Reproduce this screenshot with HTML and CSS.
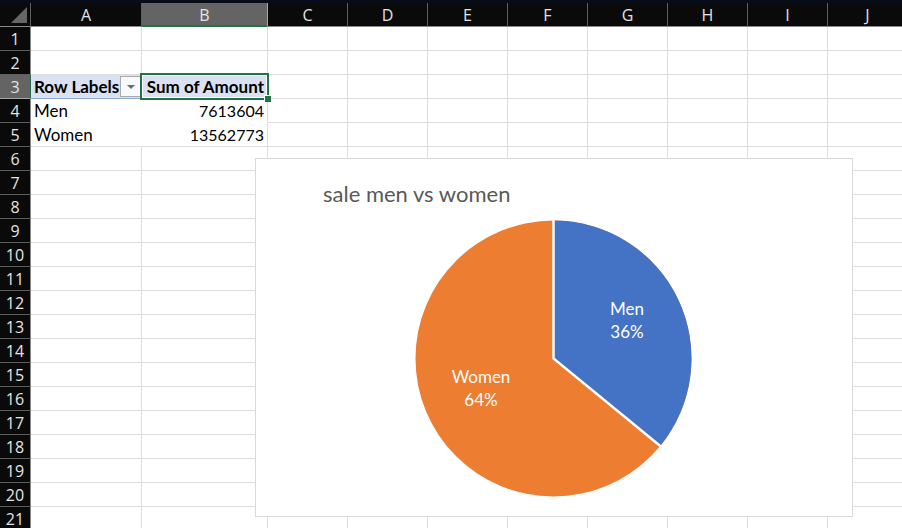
FILE: index.html
```
<!DOCTYPE html>
<html lang="en">
<head>
<meta charset="utf-8">
<title>Sales by gender</title>
<link rel="stylesheet" href="styles.css">
</head>
<body>
<main class="workbook">
  <table class="sheet">
    <colgroup><col class="col-rows"><col class="col-a"><col class="col-b"><col class="col" span="8"></colgroup>
    <thead>
      <tr><th class="corner"><svg viewBox="0 0 30 23" aria-hidden="true"><path d="M27 4v16H11z" fill="#666"/></svg></th><th>A</th><th class="active">B</th><th>C</th><th>D</th><th>E</th><th>F</th><th>G</th><th>H</th><th>I</th><th>J</th></tr>
    </thead>
    <tbody>
      <tr><th>1</th><td></td><td></td><td></td><td></td><td></td><td></td><td></td><td></td><td></td><td></td></tr>
      <tr><th>2</th><td></td><td></td><td></td><td></td><td></td><td></td><td></td><td></td><td></td><td></td></tr>
      <tr><th class="active">3</th><td class="head"><div class="field"><span>Row Labels</span><button class="filter" aria-label="Filter row labels"><svg viewBox="0 0 8 4" aria-hidden="true"><path d="M0 0h8L4 4z" fill="#6b6b6b"/></svg></button></div></td><td class="head selected">Sum of Amount</td><td></td><td></td><td></td><td></td><td></td><td></td><td></td><td></td></tr>
      <tr><th>4</th><td class="plain">Men</td><td class="plain number">7613604</td><td></td><td></td><td></td><td></td><td></td><td></td><td></td><td></td></tr>
      <tr><th>5</th><td class="plain last">Women</td><td class="plain last number">13562773</td><td></td><td></td><td></td><td></td><td></td><td></td><td></td><td></td></tr>
      <tr><th>6</th><td></td><td></td><td></td><td></td><td></td><td></td><td></td><td></td><td></td><td></td></tr>
      <tr><th>7</th><td></td><td></td><td></td><td></td><td></td><td></td><td></td><td></td><td></td><td></td></tr>
      <tr><th>8</th><td></td><td></td><td></td><td></td><td></td><td></td><td></td><td></td><td></td><td></td></tr>
      <tr><th>9</th><td></td><td></td><td></td><td></td><td></td><td></td><td></td><td></td><td></td><td></td></tr>
      <tr><th>10</th><td></td><td></td><td></td><td></td><td></td><td></td><td></td><td></td><td></td><td></td></tr>
      <tr><th>11</th><td></td><td></td><td></td><td></td><td></td><td></td><td></td><td></td><td></td><td></td></tr>
      <tr><th>12</th><td></td><td></td><td></td><td></td><td></td><td></td><td></td><td></td><td></td><td></td></tr>
      <tr><th>13</th><td></td><td></td><td></td><td></td><td></td><td></td><td></td><td></td><td></td><td></td></tr>
      <tr><th>14</th><td></td><td></td><td></td><td></td><td></td><td></td><td></td><td></td><td></td><td></td></tr>
      <tr><th>15</th><td></td><td></td><td></td><td></td><td></td><td></td><td></td><td></td><td></td><td></td></tr>
      <tr><th>16</th><td></td><td></td><td></td><td></td><td></td><td></td><td></td><td></td><td></td><td></td></tr>
      <tr><th>17</th><td></td><td></td><td></td><td></td><td></td><td></td><td></td><td></td><td></td><td></td></tr>
      <tr><th>18</th><td></td><td></td><td></td><td></td><td></td><td></td><td></td><td></td><td></td><td></td></tr>
      <tr><th>19</th><td></td><td></td><td></td><td></td><td></td><td></td><td></td><td></td><td></td><td></td></tr>
      <tr><th>20</th><td></td><td></td><td></td><td></td><td></td><td></td><td></td><td></td><td></td><td></td></tr>
      <tr><th>21</th><td></td><td></td><td></td><td></td><td></td><td></td><td></td><td></td><td></td><td></td></tr>
    </tbody>
  </table>
  <figure class="chart">
    <figcaption>sale men vs women</figcaption>
    <svg class="pie" viewBox="0 0 280 280" role="img" aria-label="Men 36%, Women 64%">
      <circle cx="139.500" cy="139.500" r="138" fill="#ed7d31"/>
      <path d="M139.500 139.500V1.500A138 138 0 0 1 246.200 227Z" fill="#4472c4"/>
      <path d="M139.500 0V139.500L249 229.300" fill="none" stroke="#fff" stroke-width="2.500"/>
      <text x="213" y="96">Men</text>
      <text x="213" y="119">36%</text>
      <text x="67" y="164">Women</text>
      <text x="67" y="187">64%</text>
    </svg>
  </figure>
</main>
</body>
</html>
```
FILE: styles.css
```
* { box-sizing: border-box; }

body {
  margin: 0;
  background: #fff;
  color: #000;
  font: 17px/22px Lato, "Noto Sans", sans-serif;
}

.workbook {
  position: relative;
  height: 100vh;
  overflow: hidden;
  border-top: 3px solid #070d18;
}

.sheet {
  width: max-content;
  min-width: 100%;
  table-layout: fixed;
  border-collapse: separate;
  border-spacing: 0;
}

.col-rows { width: 31px; }
.col-a { width: 111px; }
.col-b { width: 126px; }
.col { width: 80px; }

th, td {
  height: 24px;
  padding: 0;
  border: 0 solid #dedede;
  border-width: 0 1px 1px 0;
  white-space: nowrap;
}

td { padding: 0 3px; }

th {
  background: #0a0a0a;
  border-color: #5e5e5e;
  color: #e4e4e4;
  font-family: "Open Sans", sans-serif;
  font-size: 16px;
  font-weight: 400;
}

thead th { border-bottom-color: #8a8a8a; }
tbody th { border-right-color: #8a8a8a; }

.active { background: #646464; }

thead .active {
  border-right-color: #a6a6a6;
  border-bottom-color: #217346;
  box-shadow: inset 0 -1px #217346;
}

tbody .active {
  border-right-color: #217346;
  border-bottom-color: #a6a6a6;
}

.corner svg {
  display: block;
  width: 30px;
  height: 23px;
}

.head {
  background: #d9e1f2;
  border-bottom-color: #8ea9db;
  font-weight: 700;
}

.field {
  display: flex;
  align-items: center;
  justify-content: space-between;
  margin-right: -3px;
}

.filter {
  display: grid;
  place-items: center;
  width: 21px;
  height: 21px;
  padding: 0;
  border: 1px solid #ababab;
  background: #f8f9fb;
}

.filter svg { width: 8px; height: 4px; }

.selected {
  position: relative;
  text-align: right;
}

.selected::before {
  content: "";
  position: absolute;
  inset: -2px;
  border: 2px solid #217346;
  box-shadow: inset 0 0 0 1px #fff;
}

.selected::after {
  content: "";
  position: absolute;
  right: -4px;
  bottom: -4px;
  width: 6px;
  height: 6px;
  background: #217346;
  border: 1px solid #fff;
  border-width: 1px 0 0 1px;
}

.plain { border-color: transparent; }
.last { border-bottom-color: #dedede; }

.number {
  border-right-color: #dedede;
  font-size: 16px;
  text-align: right;
}

.chart {
  position: absolute;
  top: 155px;
  left: 255px;
  width: 598px;
  margin: 0;
  padding: 20px 0 17px;
  border: 1px solid #d9d9d9;
  background: #fff;
}

.chart figcaption {
  padding-left: 67px;
  color: #595959;
  font-size: 22px;
  line-height: 30px;
}

.pie {
  display: block;
  width: 280px;
  margin: 10px auto 0;
}

.pie text {
  fill: #fff;
  font-size: 17px;
  text-anchor: middle;
}
```
